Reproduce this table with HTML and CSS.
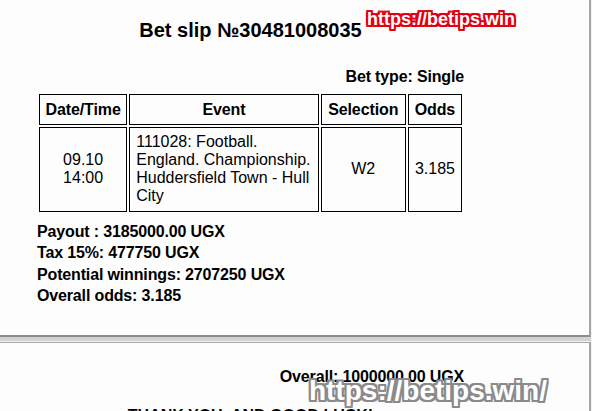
FILE: index.html
```html
<!DOCTYPE html>
<html lang="en">
<head>
    <meta charset="UTF-8">
    <meta name="viewport" content="width=device-width, initial-scale=1.0">
    <title>Bet slip</title>
    <link rel="stylesheet" href="styles.css">
</head>
<body>
    <div class="sheet sheet-first">
        <div class="slip">
            <h1 class="title">Bet slip №30481008035</h1>
            <p class="bet-type">Bet type: Single</p>
            <table class="bets">
                <colgroup>
                    <col class="col-date">
                    <col class="col-event">
                    <col class="col-sel">
                    <col class="col-odds">
                </colgroup>
                <tr>
                    <th>Date/Time</th>
                    <th>Event</th>
                    <th>Selection</th>
                    <th>Odds</th>
                </tr>
                <tr>
                    <td class="center">09.10<br>14:00</td>
                    <td>111028: Football. England. Championship. Huddersfield Town - Hull City</td>
                    <td class="center">W2</td>
                    <td class="center">3.185</td>
                </tr>
            </table>
            <div class="totals">
                <div>Payout : 3185000.00 UGX</div>
                <div>Tax 15%: 477750 UGX</div>
                <div>Potential winnings: 2707250 UGX</div>
                <div>Overall odds: 3.185</div>
            </div>
        </div>
        <span class="mark mark-red">https://betips.win</span>
    </div>
    <div class="sheet sheet-second">
        <div class="slip">
            <p class="overall">Overall: 1000000.00 UGX</p>
            <p class="footer-note">THANK YOU, AND GOOD LUCK!</p>
        </div>
        <span class="mark mark-grey">https://betips.win/</span>
    </div>
</body>
</html>
```

FILE: styles.css
```css
html, body {
    margin: 0;
    height: 411px;
    overflow: hidden;
}
body {
    font-family: "Liberation Sans", Arial, sans-serif;
    color: #000;
    background-color: #f4f4f4;
}
.sheet {
    position: relative;
    width: 591px;
    box-sizing: border-box;
    background-color: #fdfdfd;
    border-right: 2px solid #a4a4a4;
}
.sheet-first {
    height: 337px;
    border-bottom: 2px solid #8c8c8c;
    box-shadow: 0 4px 0 #d2d2d2;
}
.sheet-second {
    margin-top: 5px;
    height: 80px;
    border-top: 1px solid #a8a8a8;
}
.slip {
    width: 427px;
    margin-left: 37px;
    padding-top: 19px;
}
.title {
    margin: 0;
    font-size: 20px;
    line-height: 23px;
    text-align: center;
}
.bet-type {
    margin: 26px 0 0;
    font-size: 16px;
    font-weight: bold;
    line-height: 18px;
    letter-spacing: -0.15px;
    text-align: right;
}
.bets {
    margin-top: 6px;
    width: 427px;
    border-collapse: separate;
    border-spacing: 2px;
    table-layout: fixed;
    font-size: 16px;
    line-height: 18px;
}
.col-date { width: 88px; }
.col-event { width: 189px; }
.col-sel { width: 85px; }
.col-odds { width: 54px; }
.bets th,
.bets td {
    border: 1px solid #000;
    vertical-align: middle;
}
.bets th {
    text-align: center;
    padding: 6px 2px 5px;
    letter-spacing: -0.1px;
}
.bets td {
    text-align: left;
    padding: 5px 6px 6px;
}
.bets td.center {
    text-align: center;
}
.totals {
    margin-top: 7px;
    font-size: 16px;
    font-weight: bold;
    line-height: 21.3px;
    letter-spacing: -0.15px;
}
.overall {
    margin: 6px 0 0;
    font-size: 16px;
    font-weight: bold;
    line-height: 18px;
    letter-spacing: -0.15px;
    text-align: right;
}
.footer-note {
    margin: 21px 0 0;
    font-size: 16px;
    font-weight: bold;
    line-height: 18px;
    text-align: center;
}
.mark {
    position: absolute;
    font-family: "Liberation Sans", Arial, sans-serif;
    font-weight: bold;
    color: #fff;
    white-space: nowrap;
}
.mark-red {
    left: 367px;
    top: 9px;
    font-size: 18px;
    text-shadow: -2px 0 #e3000f, 2px 0 #e3000f, 0 -2px #e3000f, 0 2px #e3000f,
        -1px -1px #e3000f, 1px 1px #e3000f, -1px 1px #e3000f, 1px -1px #e3000f,
        -2px -2px #e3000f, 2px 2px #e3000f, -2px 2px #e3000f, 2px -2px #e3000f;
}
.mark-grey {
    left: 309px;
    top: 32px;
    font-size: 28px;
    text-shadow: -2px 0 #8a8a8a, 2px 0 #8a8a8a, 0 -2px #8a8a8a, 0 2px #8a8a8a,
        -1px -1px #8a8a8a, 1px 1px #8a8a8a, -1px 1px #8a8a8a, 1px -1px #8a8a8a,
        -2px -2px #8a8a8a, 2px 2px #8a8a8a, -2px 2px #8a8a8a, 2px -2px #8a8a8a;
}
```
